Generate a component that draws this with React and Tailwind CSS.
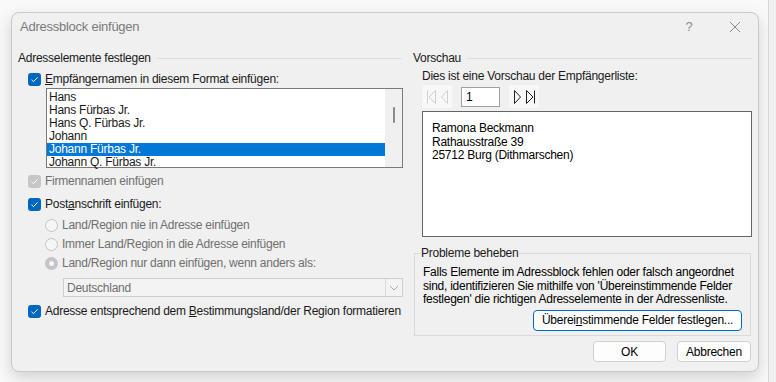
import React from 'react';

const Check = ({ disabled }) => (
    <span className={`w-[13px] h-[13px] rounded-[3px] flex items-center justify-center shrink-0 ${disabled ? 'bg-[#c6c6c6]' : 'bg-[#0067c0]'}`}>
        <svg width="9" height="9" viewBox="0 0 9 9">
            <path d="M1.5 4.8 L3.5 6.6 L7.6 2.4" fill="none" stroke="white" strokeWidth="1" />
        </svg>
    </span>
);

const Radio = ({ selected }) => (
    <span className={`w-[13px] h-[13px] rounded-full flex items-center justify-center shrink-0 ${selected ? 'bg-[#c4c4c4]' : 'bg-[#f6f6f6] border border-[#c2c2c2]'}`}>
        {selected && <span className="w-[5px] h-[5px] rounded-full bg-[#f6f6f6]" />}
    </span>
);

const names = ['Hans', 'Hans Fürbas Jr.', 'Hans Q. Fürbas Jr.', 'Johann', 'Johann Fürbas Jr.', 'Johann Q. Fürbas Jr.'];

export default function App() {
    return (
        <div className="w-[776px] h-[382px] bg-[#f9f9f9] flex overflow-hidden whitespace-nowrap font-['Liberation_Sans',sans-serif] text-[12px] tracking-[-0.25px] text-[#1a1a1a]">
            <div className="w-[768px] pl-[11px] pt-[12px]">
                <div className="w-[748px] h-[360px] bg-[#f0f0f0] border border-[#c9c9c9] rounded-[8px] shadow-[0_6px_16px_rgba(0,0,0,0.16)] flex flex-col">
                    <div className="h-[28px] flex items-center pl-[8px] text-[13px] text-[#7a7a7a]">
                        <span className="flex-1">Adressblock einfügen</span>
                        <span className="w-[12px] text-center mr-[34px] text-[#8a8a8a]">?</span>
                        <svg width="12" height="12" viewBox="0 0 12 12" className="mr-[17px]">
                            <path d="M1 1 L11 11 M11 1 L1 11" stroke="#8a8a8a" strokeWidth="1" />
                        </svg>
                    </div>

                    <div className="flex pl-[6px] pt-[10px] gap-[10px]">
                        {/* left column */}
                        <div className="w-[385px] flex flex-col">
                            <div className="h-[14px] flex items-center gap-[6px]">
                                <span>Adresselemente festlegen</span>
                                <span className="flex-1 h-px bg-[#dcdcdc] mr-[2px]" />
                            </div>
                            <div className="h-[14px] mt-[7px] ml-[10px] flex items-center gap-[4px]">
                                <Check />
                                <span><u>E</u>mpfängernamen in diesem Format einfügen:</span>
                            </div>
                            <div className="mt-[2px] ml-[28px] h-[80px] border border-[#7a7a7a] bg-white flex">
                                <div className="flex-1 flex flex-col pt-[2px]">
                                    {names.map((n, i) => (
                                        <div key={n} className={`h-[13px] leading-[13px] pl-[2px] ${i === 4 ? 'bg-[#0078d7] text-white' : ''}`}>{n}</div>
                                    ))}
                                </div>
                                <div className="w-[17px] bg-[#f0f0f0] flex justify-center pt-[18px]">
                                    <span className="w-[2px] h-[16px] bg-[#8a8a8a] rounded-full" />
                                </div>
                            </div>
                            <div className="h-[14px] mt-[6px] ml-[10px] flex items-center gap-[4px] text-[#6f6f6f]">
                                <Check disabled />
                                <span>Firmennamen einfügen</span>
                            </div>
                            <div className="h-[14px] mt-[9px] ml-[10px] flex items-center gap-[4px]">
                                <Check />
                                <span>Post<u>a</u>nschrift einfügen:</span>
                            </div>
                            <div className="h-[14px] mt-[7px] ml-[27px] flex items-center gap-[4px] text-[#6f6f6f]">
                                <Radio />
                                <span>Land/Region nie in Adresse einfügen</span>
                            </div>
                            <div className="h-[14px] mt-[5px] ml-[27px] flex items-center gap-[4px] text-[#6f6f6f]">
                                <Radio />
                                <span>Immer Land/Region in die Adresse einfügen</span>
                            </div>
                            <div className="h-[14px] mt-[5px] ml-[27px] flex items-center gap-[4px] text-[#6f6f6f]">
                                <Radio selected />
                                <span>Land/Region nur dann einfügen, wenn anders als:</span>
                            </div>
                            <div className="mt-[8px] ml-[45px] h-[19px] border border-[#cdcdcd] bg-[#f3f3f3] flex items-center text-[#6f6f6f]">
                                <span className="flex-1 pl-[3px]">Deutschland</span>
                                <span className="w-[17px] h-full border-l border-[#dadada] flex items-center justify-center">
                                    <svg width="10" height="6" viewBox="0 0 10 6">
                                        <path d="M1 1 L5 5 L9 1" fill="none" stroke="#a8a8a8" strokeWidth="1" />
                                    </svg>
                                </span>
                            </div>
                            <div className="h-[14px] mt-[7px] ml-[10px] flex items-center gap-[4px]">
                                <Check />
                                <span>Adresse entsprechend dem <u>B</u>estimmungsland/der Region formatieren</span>
                            </div>
                        </div>

                        {/* right column */}
                        <div className="w-[339px] flex flex-col">
                            <div className="h-[14px] flex items-center gap-[6px]">
                                <span>Vorschau</span>
                                <span className="flex-1 h-px bg-[#dcdcdc]" />
                            </div>
                            <div className="h-[14px] mt-[4px] ml-[9px] flex items-center">Dies ist eine Vorschau der Empfängerliste:</div>
                            <div className="h-[23px] mt-[2px] ml-[9px] flex items-center">
                                <div className="w-[30px] h-[23px] bg-[#f8f8f8] flex items-center justify-center gap-[5px]">
                                    <svg width="9" height="14" viewBox="0 0 9 14">
                                        <path d="M0.5 0.5 V13.5 M8.5 0.5 L2 7 L8.5 13.5 Z" fill="none" stroke="#cfcfcf" strokeWidth="1" />
                                    </svg>
                                    <svg width="7" height="14" viewBox="0 0 7 14">
                                        <path d="M6.5 0.5 L0.5 7 L6.5 13.5 Z" fill="none" stroke="#cfcfcf" strokeWidth="1" />
                                    </svg>
                                </div>
                                <div className="ml-[9px] w-[39px] h-[20px] border border-[#a0a0a0] bg-white flex items-center pl-[4px] text-black">1</div>
                                <div className="ml-[9px] w-[30px] h-[23px] bg-[#f8f8f8] flex items-center justify-center gap-[5px]">
                                    <svg width="7" height="14" viewBox="0 0 7 14">
                                        <path d="M0.5 0.5 L6.5 7 L0.5 13.5 Z" fill="none" stroke="#202020" strokeWidth="1" />
                                    </svg>
                                    <svg width="9" height="14" viewBox="0 0 9 14">
                                        <path d="M8.5 0.5 V13.5 M0.5 0.5 L7 7 L0.5 13.5 Z" fill="none" stroke="#202020" strokeWidth="1" />
                                    </svg>
                                </div>
                            </div>
                            <div className="mt-[3px] ml-[9px] w-[330px] h-[126px] border border-[#646464] bg-white pl-[9px] pt-[10px] leading-[13.5px] text-black">
                                <div>Ramona Beckmann</div>
                                <div>Rathausstraße 39</div>
                                <div>25712 Burg (Dithmarschen)</div>
                            </div>
                            <div className="mt-[16px] ml-[1px] w-[337px] h-[83px] border border-[#dadada] relative flex flex-col">
                                <span className="absolute left-[5px] top-[-8px] bg-[#f0f0f0] px-[1px] leading-[14px]">Probleme beheben</span>
                                <div className="pl-[8px] pt-[12px] leading-[13.5px] text-black">
                                    Falls Elemente im Adressblock fehlen oder falsch angeordnet<br />
                                    sind, identifizieren Sie mithilfe von 'Übereinstimmende Felder<br />
                                    festlegen' die richtigen Adresselemente in der Adressenliste.
                                </div>
                                <div className="flex justify-end pr-[8px] mt-[3px]">
                                    <button className="w-[209px] h-[21px] bg-white border border-[#0067c0] rounded-[4px] text-black flex items-center justify-center">
                                        Überei<u>n</u>stimmende Felder festlegen...
                                    </button>
                                </div>
                            </div>
                            <div className="mt-[5px] flex justify-end gap-[11px] pr-[1px]">
                                <button className="w-[73px] h-[21px] bg-[#fdfdfd] border border-[#d0d0d0] rounded-[4px] text-black">OK</button>
                                <button className="w-[74px] h-[21px] bg-[#fdfdfd] border border-[#d0d0d0] rounded-[4px] text-black">Abbrechen</button>
                            </div>
                        </div>
                    </div>
                </div>
            </div>
            <div className="flex-1 border-l border-[#d8d8d8] bg-[#f0f0f0]" />
        </div>
    );
}
